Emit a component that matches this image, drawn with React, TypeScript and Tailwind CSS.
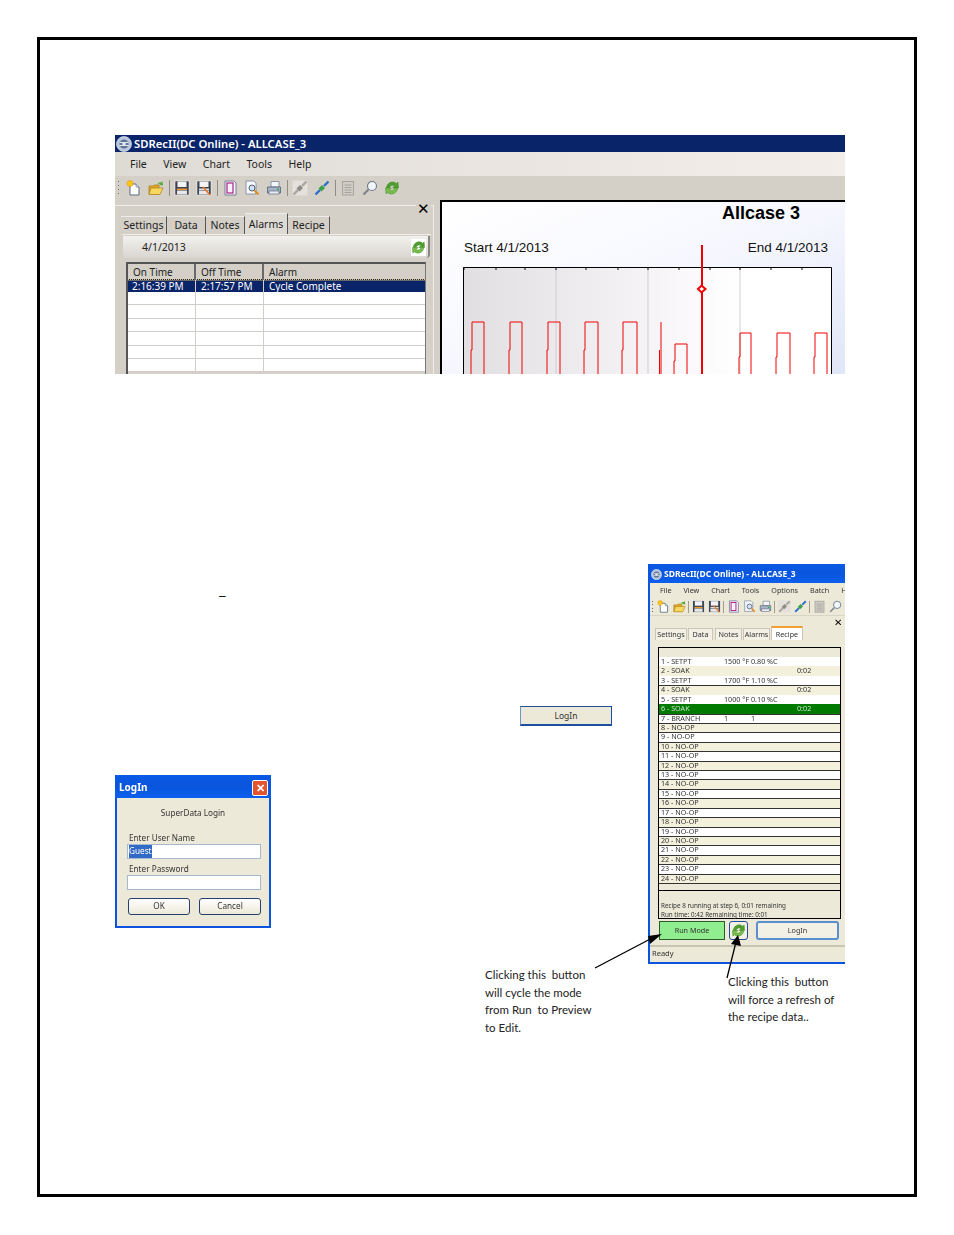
import type { ReactNode } from "react";

const uiFont = "font-['Noto_Sans','Open_Sans',sans-serif]";

const RefreshIcon = ({ className }: { className: string }) => (
	<svg viewBox="0 0 16 16" className={className}>
		<path d="M2.500 8C2.500 3 8.500 0 12.500 3.500L14 2L14.500 8H8.500L10.500 6C8.500 4.500 6 5.500 5.500 8Z" fill="#4f9e2f" stroke="#3f8a24" strokeWidth="0.5" />
		<path d="M13.500 8C13.500 13 7.500 16 3.500 12.500L2 14L1.500 8H7.500L5.500 10C7.500 11.500 10 10.500 10.500 8Z" fill="#79bd4c" stroke="#3f8a24" strokeWidth="0.5" />
	</svg>
);

const NewIcon = () => (
	<svg viewBox="0 0 16 16" className="h-full w-full">
		<path d="M4 4H10L13 7V15H4Z" fill="#fff" stroke="#5a6a80" />
		<path d="M10 4V7H13" fill="#d9e2ee" stroke="#5a6a80" strokeWidth="0.6" />
		<circle cx="4" cy="3.500" r="3" fill="#f5c518" stroke="#f08a00" strokeWidth="0.8" strokeDasharray="1 0.6" />
	</svg>
);

const OpenIcon = () => (
	<svg viewBox="0 0 16 16" className="h-full w-full">
		<path d="M1 6H5L6 5H11V14H1Z" fill="#e0a92a" stroke="#a97a14" strokeWidth="0.7" />
		<path d="M3 8H15L12 14.500H1Z" fill="#f8d860" stroke="#a97a14" strokeWidth="0.7" />
		<path d="M9 5C10 2.500 12 2 13.500 2.500L14.500 1L15 5.500L11 5L12.500 4C11 3.500 10 4 9 5Z" fill="#54a83a" />
	</svg>
);

const SaveIcon = ({ edit }: { edit?: boolean }) => (
	<svg viewBox="0 0 16 16" className="h-full w-full">
		<rect x="1" y="1" width="14" height="14" fill="#3d4552" stroke="#fff" strokeWidth="0.5" />
		<rect x="3.500" y="1.500" width="9" height="5.500" fill="#f4f4f4" />
		<rect x="3" y="8.500" width="10" height="1.500" fill={edit ? "#e5e5e5" : "#f09a30"} />
		<rect x="3" y="10.500" width="10" height="4" fill="#e8e8e8" />
		{edit && <path d="M7 7L14 15" stroke="#e8762a" strokeWidth="1.600" />}
	</svg>
);

const BookIcon = () => (
	<svg viewBox="0 0 16 16" className="h-full w-full">
		<path d="M3 1H12L14 3V15H3Z" fill="#f3f4fa" stroke="#5b6484" strokeWidth="0.8" />
		<rect x="5" y="3" width="6" height="10" fill="none" stroke="#b0208a" strokeWidth="1.200" />
	</svg>
);

const PreviewIcon = () => (
	<svg viewBox="0 0 16 16" className="h-full w-full">
		<path d="M2 1H10L12 3V14H2Z" fill="#f6f8fc" stroke="#77839a" strokeWidth="0.8" />
		<circle cx="8" cy="8" r="3" fill="#cfe1f5" stroke="#54617a" />
		<path d="M10.500 10.500L14.500 14.500" stroke="#e08a20" strokeWidth="2" />
	</svg>
);

const PrintIcon = () => (
	<svg viewBox="0 0 16 16" className="h-full w-full">
		<path d="M5 1.500H13V7H5Z" fill="#f3f6fa" stroke="#67728a" strokeWidth="0.7" />
		<path d="M1.500 7H14.500V13H1.500Z" fill="#aab4c6" stroke="#515c74" strokeWidth="0.8" />
		<rect x="3" y="11" width="10" height="3" fill="#e9edf3" stroke="#515c74" strokeWidth="0.6" />
		<rect x="11" y="8.500" width="2" height="1.500" fill="#22b14c" />
	</svg>
);

const ConnectIcon = ({ off }: { off?: boolean }) => (
	<svg viewBox="0 0 16 16" className="h-full w-full">
		{off && <rect x="0.500" y="0.500" width="15" height="15" fill="#e4e1dc" />}
		<path d="M1.500 14.500L6 10" stroke={off ? "#a8a6a2" : "#2e6fc8"} strokeWidth="2.400" />
		<path d="M14.500 1.500L10 6" stroke={off ? "#a8a6a2" : "#2e6fc8"} strokeWidth="2.400" />
		<path d="M4.500 8.500L8 5L11 8L7.500 11.500Z" fill={off ? "#8e8c88" : "#3aa04a"} />
	</svg>
);

const DocOffIcon = () => (
	<svg viewBox="0 0 16 16" className="h-full w-full">
		<rect x="2.500" y="1.500" width="11" height="13.500" fill="#cfccc6" stroke="#a7a49e" />
		<path d="M4.500 5H11.500M4.500 7.500H11.500M4.500 10H11.500M4.500 12.500H11.500" stroke="#a7a49e" />
	</svg>
);

const LensIcon = () => (
	<svg viewBox="0 0 16 16" className="h-full w-full">
		<circle cx="10" cy="6" r="4.500" fill="#f2f5f9" stroke="#6c7788" strokeWidth="1.100" />
		<path d="M6.500 9.500L1.500 14.500" stroke="#7b7f87" strokeWidth="1.800" />
	</svg>
);

const AppGlobe = ({ className }: { className: string }) => (
	<svg viewBox="0 0 16 16" className={className}>
		<circle cx="8" cy="8" r="7.500" fill="#b9c6dc" stroke="#e3e8f1" strokeWidth="0.7" />
		<circle cx="8" cy="8" r="4.500" fill="#5f7498" />
		<path d="M4 6.500H12M3.500 9.500H12.500" stroke="#e3e8f1" />
		<circle cx="8" cy="8" r="1.800" fill="#dfe5ef" />
	</svg>
);

const Grip = ({ className }: { className: string }) => (
	<div className={`flex flex-col justify-between ${className}`}>
		<span className="h-px w-px bg-[#6e6c68]" />
		<span className="h-px w-px bg-[#6e6c68]" />
		<span className="h-px w-px bg-[#6e6c68]" />
		<span className="h-px w-px bg-[#6e6c68]" />
	</div>
);

const toolGroups: ReactNode[][] = [
	[<NewIcon key="new" />, <OpenIcon key="open" />],
	[<SaveIcon key="save" />, <SaveIcon key="saveas" edit />],
	[<BookIcon key="book" />, <PreviewIcon key="preview" />, <PrintIcon key="print" />],
	[<ConnectIcon key="off" off />, <ConnectIcon key="on" />],
];

const Toolbar = ({ slot, icon, sep, refresh }: { slot: string; icon: string; sep: string; refresh?: boolean }) => (
	<>
		{toolGroups.map((group, i) => (
			<div key={i} className="flex items-center">
				{group.map((item, j) => (
					<div key={j} className={`flex items-center justify-center ${slot}`}>
						<div className={icon}>{item}</div>
					</div>
				))}
				<div className={sep} />
			</div>
		))}
		<div className={`flex items-center justify-center ${slot}`}>
			<div className={icon}>
				<DocOffIcon />
			</div>
		</div>
		<div className={`flex items-center justify-center ${slot}`}>
			<div className={icon}>
				<LensIcon />
			</div>
		</div>
		{refresh && (
			<div className={`flex items-center justify-center ${slot}`}>
				<RefreshIcon className={icon} />
			</div>
		)}
	</>
);

const bigBars = [
	[472, 484, 55, 83],
	[510, 522, 55, 83],
	[548, 560, 55, 83],
	[585, 598, 55, 83],
	[623, 637, 55, 83],
	[675, 687, 77, 94],
	[740, 751, 66, 90],
	[777, 790, 66, 90],
	[815, 827, 66, 90],
];

const ticks = [464, 496, 525, 556, 586, 618, 648, 679, 710, 740, 771, 802];

const ChartPlot = () => (
	<svg
		viewBox="0 0 369 107"
		className="ml-[21px] mt-[11px] block h-[107px] w-[369px] overflow-visible bg-linear-to-r from-[#e2dfe2] via-[#f6f3f6] via-50% to-white to-75%"
	>
		<path d="M93 0V107M185 0V107M277 0V107" stroke="#cfcdd2" fill="none" />
		{ticks.map((t) => (
			<line key={t} x1={t - 463} x2={t - 463} y1="0" y2="3" stroke="#111" />
		))}
		<path d="M0.500 107V0.500H368.500V107" fill="none" stroke="#000" />
		{bigBars.map(([a, b, top, step]) => (
			<path
				key={a}
				d={`M${a - 464} 107V${step}H${a - 463}V${top}H${b - 463}V107`}
				fill="none"
				stroke="#f00000"
			/>
		))}
		<path d="M198 55V107M196.500 83V107" fill="none" stroke="#f00000" />
		<path d="M239 -22V107" stroke="#f00000" strokeWidth="2" />
		<path d="M235 22L238.500 18.500L242.500 22L238.500 25.500Z" fill="#fff" stroke="#f00000" strokeWidth="2" />
	</svg>
);

const tabClass = "flex items-center justify-center border-r border-[#555] border-t border-t-[#efedea] pt-px text-[10.500px] text-[#222]";

const alarmRows = [0, 1, 2, 3, 4, 5];

const AlarmsWindow = () => (
	<div className={`absolute left-[115px] top-[135px] flex h-[239px] w-[730px] flex-col overflow-hidden bg-[#d4d0c8] ${uiFont}`}>
		<div className="flex h-[17px] shrink-0 items-center gap-[2px] bg-[#0a246a] pl-px pt-px text-[11.300px] font-semibold text-white">
			<AppGlobe className="h-[16px] w-[16px]" />
			SDRecII(DC Online) - ALLCASE_3
		</div>
		<div className="flex h-[24px] shrink-0 items-center gap-[16.500px] bg-linear-to-r from-[#dedbd5] to-[#f4eeeb] pl-[15px] pt-[2px] text-[10.500px] text-[#222]">
			<span>File</span>
			<span>View</span>
			<span>Chart</span>
			<span>Tools</span>
			<span>Help</span>
		</div>
		<div className="flex h-[23px] shrink-0 items-center pl-[3px]">
			<Grip className="mr-[4px] h-[14px]" />
			<Toolbar slot="w-[22px]" icon="h-[16px] w-[16px]" sep="mx-[1.500px] h-[16px] w-px bg-[#8f8c86]" refresh />
		</div>
		<div className="flex h-[175px] shrink-0 overflow-hidden bg-[#d4d0c8]">
			<div className="relative mt-[6px] h-[169px] w-[319px] shrink-0 border-r border-t border-[#efedea]">
				<div className="absolute right-[2px] top-[-6px] bg-[#d4d0c8] px-px text-[15px] leading-[16px] text-black">✕</div>
				<div className="mt-[10px] flex h-[18px] pl-[6px]">
					<div className={`${tabClass} w-[46px]`}>Settings</div>
					<div className={`${tabClass} w-[39px]`}>Data</div>
					<div className={`${tabClass} w-[39px]`}>Notes</div>
					<div className={`${tabClass} -mt-[3px] h-[21px] w-[43px] bg-[#dedbd5]`}>Alarms</div>
					<div className={`${tabClass} w-[42px]`}>Recipe</div>
				</div>
				<div className="ml-[7px] mr-[2px] h-[140px] border-t border-[#efedea] px-px pt-[1px]">
					<div className="flex h-[22px] items-center justify-between rounded-b-sm border-r-2 border-[#8a8884] bg-linear-to-b from-[#f3f1ee] to-[#d9d6d0] pl-[19px] pr-[2px] pt-px text-[10.500px] text-[#222]">
						4/1/2013
						<RefreshIcon className="h-[17px] w-[15px] bg-white" />
					</div>
					<div className="ml-[3px] mt-[4px] h-[120px] w-[300px] border-l-2 border-r border-t-2 border-[#555] border-r-[#777] text-[10px] text-[#222]">
						<div className="grid h-[15px] grid-cols-[68px_68px_1fr] bg-[#d4d0c8]">
							<div className="border-b border-r-2 border-[#6a6a6a] pl-[5px] leading-[16px]">On Time</div>
							<div className="border-b border-r-2 border-[#6a6a6a] pl-[5px] leading-[16px]">Off Time</div>
							<div className="border-b border-[#6a6a6a] pl-[5px] leading-[16px]">Alarm</div>
						</div>
						<div className="grid h-[13px] grid-cols-[68px_68px_1fr] border-t border-dotted border-t-[#e8c060] bg-[#0a246a] leading-[12px] text-white">
							<div className="border-r border-[#d4d0c8] pl-[4px]">2:16:39 PM</div>
							<div className="border-r border-[#d4d0c8] pl-[5px]">2:17:57 PM</div>
							<div className="pl-[5px]">Cycle Complete</div>
						</div>
						{alarmRows.map((row) => (
							<div key={row} className="grid h-[13.400px] grid-cols-[68px_68px_1fr] border-b border-[#cfcdc8] bg-white">
								<div className="border-r border-[#cfcdc8]" />
								<div className="border-r border-[#cfcdc8]" />
								<div />
							</div>
						))}
					</div>
				</div>
			</div>
			<div className="ml-[6px] mt-[1px] h-[175px] flex-1 border-l-2 border-t-2 border-black bg-linear-to-br from-white via-[#f6f7fe] to-[#dfe6f7]">
				<div className="ml-[280px] font-['Liberation_Sans',sans-serif] text-[18px] font-bold leading-[22px] text-black">Allcase 3</div>
				<div className="ml-[22px] mr-[17px] mt-[16px] flex justify-between font-['Liberation_Sans',sans-serif] text-[13.500px] leading-[16px] text-[#111]">
					<span>Start 4/1/2013</span>
					<span>End 4/1/2013</span>
				</div>
				<ChartPlot />
			</div>
		</div>
	</div>
);

const recipeRows = [
	{ name: "1 - SETPT", value: "1500 °F 0.80 %C" },
	{ name: "2 - SOAK", time: "0:02" },
	{ name: "3 - SETPT", value: "1700 °F 1.10 %C" },
	{ name: "4 - SOAK", time: "0:02" },
	{ name: "5 - SETPT", value: "1000 °F 0.10 %C" },
	{ name: "6 - SOAK", time: "0:02", active: true },
	{ name: "7 - BRANCH", value: "1", extra: "1" },
	...[8, 9, 10, 11, 12, 13, 14, 15, 16, 17, 18, 19, 20, 21, 22, 23, 24].map((n) => ({
		name: `${n} - NO-OP`,
	})),
] as { name: string; value?: string; extra?: string; time?: string; active?: boolean }[];

const smallTab = "flex items-center justify-center border-l border-r border-t border-[#c9c6b8] bg-[#f3f1e6] text-[7.200px] text-[#333]";

const RecipeWindow = () => (
	<div className={`absolute left-[648px] top-[564px] flex h-[400px] w-[197px] flex-col overflow-hidden border-b-2 border-l-2 border-[#0a54e0] bg-[#ece9d8] ${uiFont} blur-[0.3px]`}>
		<div className="flex h-[19px] shrink-0 items-center gap-[2px] bg-linear-to-b from-[#0a5ae6] via-[#0a55dc] to-[#0c60ee] pl-px pt-px text-[8.500px] font-bold text-white">
			<AppGlobe className="h-[11px] w-[11px]" />
			SDRecII(DC Online) - ALLCASE_3
		</div>
		<div className="flex h-[15px] shrink-0 items-center gap-[12px] whitespace-nowrap pl-[10px] text-[7.200px] text-[#333]">
			<span>File</span>
			<span>View</span>
			<span>Chart</span>
			<span>Tools</span>
			<span>Options</span>
			<span>Batch</span>
			<span>Help</span>
		</div>
		<div className="flex h-[17px] shrink-0 items-center pl-[2px]">
			<Grip className="mr-[2px] h-[11px]" />
			<Toolbar slot="w-[16px]" icon="h-[13px] w-[13px]" sep="mx-px h-[12px] w-px bg-[#a09d90]" />
		</div>
		<div className="flex h-[13px] shrink-0 justify-end border-t border-[#d9d6c6] pr-[3px] text-[10px] leading-[12px] text-black">✕</div>
		<div className="flex h-[12px] shrink-0 pl-[5px]">
			<div className={`${smallTab} w-[32px]`}>Settings</div>
			<div className={`${smallTab} ml-px w-[25px]`}>Data</div>
			<div className={`${smallTab} ml-[2px] w-[27px]`}>Notes</div>
			<div className={`${smallTab} ml-px w-[27px]`}>Alarms</div>
			<div className="-mt-[2px] ml-px flex h-[14px] w-[32px] items-center justify-center border-x border-t-2 border-[#c9c6b8] border-t-[#f0a030] bg-white text-[7.200px] text-[#333]">Recipe</div>
		</div>
		<div className="ml-[8px] mt-[7px] h-[272px] w-[183px] shrink-0 border border-black bg-[#ece9d8] text-[7.200px] text-[#333]">
			<div className="h-[9px]" />
			{recipeRows.map((row, i) => (
				<div
					key={row.name}
					className={`grid h-[9.430px] grid-cols-[63px_27px_1fr] whitespace-nowrap pl-[2px] ${
						i >= 6 || i === 3 ? "border-t border-[#333] leading-[7px]" : "leading-[8px]"
					} ${row.active ? "bg-[#007a00] text-[#cde3cd]" : i % 2 === 0 ? "bg-white" : "bg-[#f3f1dc]"}`}
				>
					<span>{row.name}</span>
					<span>{row.value}</span>
					<span className={row.time ? "pl-[46px]" : ""}>{row.extra ?? row.time}</span>
				</div>
			))}
			<div className="h-[8px] border-b border-t border-b-black border-t-[#333]" />
			<div className="pl-[2px] pt-[10px] text-[6.300px] leading-[9px]">Recipe 8 running at step 6, 0:01 remaining</div>
			<div className="pl-[2px] text-[6.300px] leading-[10px]">Run time: 0:42 Remaining time: 0:01</div>
		</div>
		<div className="ml-[9px] mt-[2px] flex h-[19px] shrink-0 items-center text-[7.200px] text-[#333]">
			<div className="flex h-[19px] w-[66px] items-center justify-center border border-[#2c5c2c] bg-[#90ee90]">Run Mode</div>
			<div className="ml-[4px] flex h-[19px] w-[19px] items-center justify-center rounded-[3px] border border-[#1f4f9c] bg-[#f3f1e6]">
				<RefreshIcon className="h-[15px] w-[15px]" />
			</div>
			<div className="ml-[8px] flex h-[19px] w-[83px] items-center justify-center rounded-[3px] border-2 border-[#5c8fd0] bg-[#f3f1e6]">LogIn</div>
		</div>
		<div className="mt-[5px] flex-1 border-t-2 border-[#c9c6b4] pl-[2px] text-[7.500px] leading-[13px] text-[#333]">Ready</div>
	</div>
);

const LoginDialog = () => (
	<div className={`absolute left-[115px] top-[775px] flex h-[153px] w-[156px] flex-col border-2 border-t-0 border-[#0a54e0] bg-[#ece9d8] ${uiFont} blur-[0.3px] text-[8.200px] text-[#333]`}>
		<div className="-mx-[2px] flex h-[23px] shrink-0 items-center justify-between rounded-t-[3px] bg-linear-to-b from-[#0a5ae6] via-[#0a55dc] to-[#0c60ee] pl-[4px] pr-[3px] pt-[2px] text-[10px] font-bold text-white">
			LogIn
			<div className="flex h-[16px] w-[16px] items-center justify-center rounded-[2px] border border-white bg-[#e2552e] text-[11px] leading-none">✕</div>
		</div>
		<div className="mt-[9px] text-center leading-[12px]">SuperData Login</div>
		<div className="ml-[12px] mt-[14px] leading-[10px]">Enter User Name</div>
		<div className="ml-[10px] mt-px flex h-[15px] w-[134px] items-center border border-[#a5b8d0] bg-white pl-px">
			<span className="bg-[#316ac5] text-white">Guest</span>
		</div>
		<div className="ml-[12px] mt-[5px] leading-[10px]">Enter Password</div>
		<div className="ml-[10px] mt-px h-[15px] w-[134px] border border-[#a5b8d0] bg-white" />
		<div className="ml-[11px] mt-[8px] flex gap-[9px]">
			<div className="flex h-[17px] w-[62px] items-center justify-center rounded-[3px] border border-[#25406e] bg-linear-to-b from-white to-[#ece9d8]">OK</div>
			<div className="flex h-[17px] w-[62px] items-center justify-center rounded-[3px] border border-[#25406e] bg-linear-to-b from-white to-[#ece9d8]">Cancel</div>
		</div>
	</div>
);

const Arrows = () => (
	<svg viewBox="0 0 954 1235" className="pointer-events-none absolute left-0 top-0 h-[1235px] w-[954px]">
		<path d="M595 968L656 936" stroke="#000" strokeWidth="1.300" fill="none" />
		<path d="M650 944L662 934L648 936Z" fill="#000" />
		<path d="M727 978L736 942" stroke="#000" strokeWidth="1.300" fill="none" />
		<path d="M731 944L738 935L741 946Z" fill="#000" />
	</svg>
);

const noteText = "absolute font-['Lato','Open_Sans',sans-serif] text-[11.500px] leading-[17.500px] text-[#222] whitespace-pre";

export default function App() {
	return (
		<div className="relative h-[1235px] w-[954px] overflow-hidden bg-white">
			<div className="ml-[37px] mt-[37px] inline-block h-[1160px] w-[880px] border-[3px] border-black align-top" />
			<AlarmsWindow />
			<div className="absolute left-[219px] top-[587px] font-['Liberation_Sans',sans-serif] text-[12px] text-black">–</div>
			<div className="absolute left-[520px] top-[706px] flex h-[20px] w-[92px] items-center justify-center border border-b-2 border-[#1f4f9c] border-l-[#6d95c9] bg-[#ece9d8] pt-px font-['Noto_Sans',sans-serif] text-[8.500px] text-[#333]">
				LogIn
			</div>
			<LoginDialog />
			<RecipeWindow />
			<Arrows />
			<div className={`${noteText} left-[485px] top-[966px]`}>
				{"Clicking this  button\nwill cycle the mode\nfrom Run  to Preview\nto Edit."}
			</div>
			<div className={`${noteText} left-[728px] top-[973px]`}>
				{"Clicking this  button\nwill force a refresh of\nthe recipe data.."}
			</div>
		</div>
	);
}
